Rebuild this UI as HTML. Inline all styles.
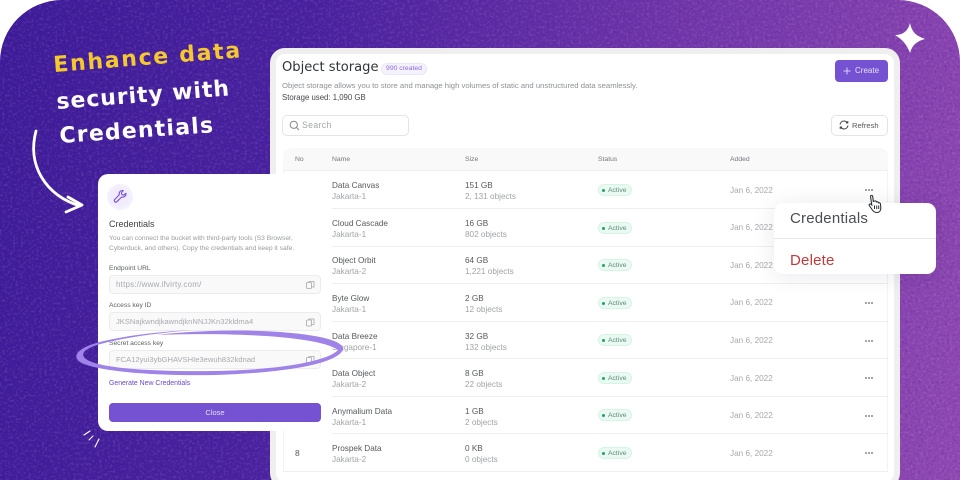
<!DOCTYPE html>
<html><head><meta charset="utf-8">
<style>
*{box-sizing:border-box;margin:0;padding:0}
html,body{width:960px;height:480px;overflow:hidden;background:#fff}
body{position:relative;font-family:"Liberation Sans","DejaVu Sans",sans-serif}
#bg{position:absolute;left:0;top:0;width:960px;height:480px;border-radius:62px 62px 0 0;overflow:hidden;background:linear-gradient(100deg,#3c1b98 0%,#47209e 30%,#6c33a8 62%,#9049b2 100%)}
#bg svg{position:absolute;left:0;top:0}
.a{position:absolute;white-space:nowrap}
#card{position:absolute;left:270px;top:48px;width:630px;height:440px;background:#fff;border:6px solid #efefef;border-radius:15px}
.n{font-size:8.2px;color:#55585d;margin-top:1px}
.s{font-size:8.2px;color:#a0a3a7;margin-top:1px}
.d{position:absolute;left:332px;width:556px;height:1px;background:#efefef}
.badge{position:absolute;left:598px;width:34px;height:12px;border-radius:6px;background:#eafaf3;border:1px solid #d6f4e6;font-size:6.8px;line-height:11px;color:#5d8a76;padding-left:9px}
.badge:before{content:"";position:absolute;left:3px;top:3.500px;width:3px;height:3px;border-radius:50%;background:#1fa36c}
.dt{font-size:8.2px;color:#a5a8ac;left:730px}
.dots{left:865px;width:8px;height:2px;background:radial-gradient(circle at 1px 1px,#85878b 0.8px,transparent 1px) 0 0/3px 2px}
#modal{position:absolute;left:98px;top:174px;width:234px;height:257px;background:#fff;border-radius:10px}
.inp{position:absolute;left:109px;width:212px;height:19px;background:#f9f9fa;border:1px solid #ececee;border-radius:4px;font-size:7.600px;line-height:17px;color:#a8aaae;padding-left:6px}
.lb{font-size:6.700px;color:#5d6065}
</style></head>
<body>
<div id="bg">
<svg width="960" height="480">
<filter id="nz" x="0" y="0" width="100%" height="100%"><feTurbulence type="fractalNoise" baseFrequency="0.38" numOctaves="2" seed="4"/><feColorMatrix type="matrix" values="0 0 0 0 .1  0 0 0 0 .02  0 0 0 0 .3  3.500 0 0 0 -1.700"/></filter>
<filter id="nz2" x="0" y="0" width="100%" height="100%"><feTurbulence type="fractalNoise" baseFrequency="0.38" numOctaves="2" seed="11"/><feColorMatrix type="matrix" values="0 0 0 0 1  0 0 0 0 .8  0 0 0 0 1  3.500 0 0 0 -1.700"/></filter>
<rect width="960" height="480" filter="url(#nz)" opacity=".3"/>
<rect width="960" height="480" filter="url(#nz2)" opacity=".1"/>
</svg>
</div>

<svg class="a" style="left:0;top:0" width="960" height="480">
<g font-family="'DejaVu Sans',sans-serif">
<text x="54" y="72" transform="rotate(-4.500 54 72)" font-size="22" font-weight="700" fill="#f5c92e" letter-spacing="1.700">Enhance data</text>
<text x="57" y="109" transform="rotate(-4.500 57 109)" font-size="22" fill="#fff" font-weight="700" letter-spacing=".95">security with</text>
<text x="60" y="143" transform="rotate(-4 60 143)" font-size="22" fill="#fff" font-weight="700" letter-spacing="1.200">Credentials</text>
</g>
<path d="M36 131C27 165 45 195 80 206" fill="none" stroke="#fff" stroke-width="2.800" stroke-linecap="round"/>
<path d="M68 197L82 205L66 212" fill="none" stroke="#fff" stroke-width="2.800" stroke-linecap="round" stroke-linejoin="round"/>
<path d="M910 23C912 33 917 36 925 39C917 41 912 45 910 53C907 45 903 40 895 35C903 35 908 31 910 23Z" fill="#fff"/>
<path d="M84 435L90 431M89 440L93 436M95 447L99 439" stroke="#fff" stroke-width="1.100" stroke-linecap="round"/>
</svg>

<div id="card"></div>
<div class="a" style="left:282px;top:60px;font-size:13.100px;line-height:16px;color:#30343a;font-family:'DejaVu Sans',sans-serif">Object storage</div>
<div class="a" style="left:381px;top:63px;width:46px;height:12px;border-radius:6px;background:#f6f2fd;border:1px solid #ece6f8;font-size:6.800px;line-height:10px;color:#8a6bd6;text-align:center">990 created</div>
<div class="a" style="left:282px;top:81px;font-size:7.700px;color:#8d9095">Object storage allows you to store and manage high volumes of static and unstructured data seamlessly.</div>
<div class="a" style="left:282px;top:93px;font-size:7.800px;color:#45484d">Storage used: 1,090 GB</div>

<div class="a" style="left:835px;top:60px;width:53px;height:22px;border-radius:4px;background:#7552d2;color:#e7e0fa;font-size:8px;line-height:22px;padding-left:20px">Create</div>
<svg class="a" style="left:843px;top:67px" width="8" height="8"><path d="M4 .5V7.500M.5 4H7.500" stroke="#d8ccf7" stroke-width="1"/></svg>

<div class="a" style="left:282px;top:115px;width:127px;height:21px;border:1px solid #e4e4e6;border-radius:5px;background:#fff;font-size:8.800px;line-height:19px;color:#a5a7ab;padding-left:19px;letter-spacing:.3px">Search</div>
<svg class="a" style="left:289px;top:120px" width="11" height="11" viewBox="0 0 11 11"><circle cx="4.800" cy="4.800" r="3.600" fill="none" stroke="#888" stroke-width="1"/><path d="M7.500 7.500L10 10" stroke="#888" stroke-width="1"/></svg>

<div class="a" style="left:831px;top:115px;width:57px;height:21px;border:1px solid #e4e4e6;border-radius:5px;background:#fff;font-size:7.600px;line-height:19px;color:#54575c;padding-left:20px">Refresh</div>
<svg class="a" style="left:839px;top:120px" width="10" height="10" viewBox="0 0 10 10" fill="none" stroke="#444" stroke-width="1"><path d="M1 4.500C1.500 2 3.500 1 5 1C6.500 1 7.600 1.700 8.400 2.800M9 5.500C8.500 8 6.500 9 5 9C3.500 9 2.400 8.300 1.600 7.200"/><path d="M8.800 1V3H6.800M1.200 9V7H3.200"/></svg>

<div class="a" style="left:283px;top:148px;width:605px;height:23px;background:#f9f9f9;border-bottom:1px solid #efefef;border-radius:8px 8px 0 0"></div>
<div class="a" style="left:283px;top:171px;width:605px;height:300px;border-left:1px solid #f3f3f3;border-right:1px solid #f3f3f3"></div>
<div class="a" style="left:295px;top:156px;font-size:6.800px;color:#74777c">No</div>
<div class="a" style="left:332px;top:156px;font-size:6.800px;color:#74777c">Name</div>
<div class="a" style="left:465px;top:156px;font-size:6.800px;color:#74777c">Size</div>
<div class="a" style="left:598px;top:156px;font-size:6.800px;color:#74777c">Status</div>
<div class="a" style="left:730px;top:156px;font-size:6.800px;color:#74777c">Added</div>

<div class="d" style="top:208px"></div><div class="d" style="top:246px"></div><div class="d" style="top:283px"></div><div class="d" style="top:321px"></div><div class="d" style="top:358px"></div><div class="d" style="top:396px"></div><div class="d" style="top:433px"></div><div class="d" style="top:471px;left:283px;width:605px"></div>

<div class="a n" style="left:332px;top:180px">Data Canvas</div><div class="a s" style="left:332px;top:191px">Jakarta-1</div><div class="a n" style="left:465px;top:180px">151 GB</div><div class="a s" style="left:465px;top:191px">2, 131 objects</div><div class="badge" style="top:184px">Active</div><div class="a dt" style="top:186px">Jan 6, 2022</div><div class="a dots" style="top:189px"></div>
<div class="a n" style="left:332px;top:218px">Cloud Cascade</div><div class="a s" style="left:332px;top:229px">Jakarta-1</div><div class="a n" style="left:465px;top:218px">16 GB</div><div class="a s" style="left:465px;top:229px">802 objects</div><div class="badge" style="top:222px">Active</div><div class="a dt" style="top:223px">Jan 6, 2022</div>
<div class="a n" style="left:332px;top:255px">Object Orbit</div><div class="a s" style="left:332px;top:266px">Jakarta-2</div><div class="a n" style="left:465px;top:255px">64 GB</div><div class="a s" style="left:465px;top:266px">1,221 objects</div><div class="badge" style="top:259px">Active</div><div class="a dt" style="top:261px">Jan 6, 2022</div>
<div class="a n" style="left:332px;top:293px">Byte Glow</div><div class="a s" style="left:332px;top:304px">Jakarta-1</div><div class="a n" style="left:465px;top:293px">2 GB</div><div class="a s" style="left:465px;top:304px">12 objects</div><div class="badge" style="top:297px">Active</div><div class="a dt" style="top:298px">Jan 6, 2022</div><div class="a dots" style="top:302px"></div>
<div class="a n" style="left:332px;top:331px">Data Breeze</div><div class="a s" style="left:332px;top:342px">Singapore-1</div><div class="a n" style="left:465px;top:331px">32 GB</div><div class="a s" style="left:465px;top:342px">132 objects</div><div class="badge" style="top:334px">Active</div><div class="a dt" style="top:336px">Jan 6, 2022</div><div class="a dots" style="top:340px"></div>
<div class="a n" style="left:332px;top:368px">Data Object</div><div class="a s" style="left:332px;top:379px">Jakarta-2</div><div class="a n" style="left:465px;top:368px">8 GB</div><div class="a s" style="left:465px;top:379px">22 objects</div><div class="badge" style="top:372px">Active</div><div class="a dt" style="top:374px">Jan 6, 2022</div><div class="a dots" style="top:377px"></div>
<div class="a n" style="left:332px;top:406px">Anymalium Data</div><div class="a s" style="left:332px;top:417px">Jakarta-1</div><div class="a n" style="left:465px;top:406px">1 GB</div><div class="a s" style="left:465px;top:417px">2 objects</div><div class="badge" style="top:409px">Active</div><div class="a dt" style="top:411px">Jan 6, 2022</div><div class="a dots" style="top:415px"></div>
<div class="a" style="left:295px;top:448px;font-size:8.500px;color:#54575c">8</div>
<div class="a n" style="left:332px;top:443px">Prospek Data</div><div class="a s" style="left:332px;top:454px">Jakarta-2</div><div class="a n" style="left:465px;top:443px">0 KB</div><div class="a s" style="left:465px;top:454px">0 objects</div><div class="badge" style="top:447px">Active</div><div class="a dt" style="top:449px">Jan 6, 2022</div><div class="a dots" style="top:452px"></div>

<div class="a" style="left:774px;top:203px;width:162px;height:71px;background:#fff;border-radius:9px;box-shadow:0 2px 22px rgba(40,30,70,.10)"></div>
<div class="a" style="left:774px;top:238px;width:162px;height:1px;background:#e6e6e8"></div>
<div class="a" style="left:790px;top:210px;font-size:15px;color:#4b4f55;letter-spacing:.2px">Credentials</div>
<div class="a" style="left:790px;top:252px;font-size:15px;color:#c0393b;letter-spacing:.2px">Delete</div>
<svg class="a" style="left:867px;top:194px" width="16" height="19" viewBox="0 0 15 19"><path d="M3 2.500C3 1 5 1 5.200 2.500L5.800 7.500L7.200 7C8.200 6.800 8.800 7.200 9 8C10 7.500 10.800 8 11 8.800C12 8.500 13 9 13 10.200L13.300 14C13.300 16.500 12 18.500 9.500 18.500C7 18.500 5.800 17.500 4.500 15.500L1.800 11.500C1.200 10.500 2.500 9.500 3.500 10.300L4.300 11Z" fill="#fff" stroke="#2e3136" stroke-width="1.100"/><path d="M7 11.500V15M9.200 11.500V15M11.200 11.500V15" stroke="#2e3136" stroke-width="1"/></svg>

<div id="modal"></div>
<div class="a" style="left:107px;top:184px;width:26px;height:26px;border-radius:50%;background:radial-gradient(circle,#f1ebfd 40%,#faf8fe 100%)"></div>
<svg class="a" style="left:113px;top:189px" width="15" height="15" viewBox="0 0 15 15"><path d="M9.500 1.500A3.300 3.300 0 0 0 6.300 5.800L1.700 10.500A1.500 1.500 0 0 0 3.900 12.700L8.700 8A3.300 3.300 0 0 0 12.900 4.300L10.800 6.100L8.800 5.700L8.400 3.700L10.200 1.600Z" fill="none" stroke="#7552d2" stroke-width="1.100" stroke-linejoin="round"/></svg>
<div class="a" style="left:109px;top:219px;font-size:9px;color:#3f4247">Credentials</div>
<div class="a" style="left:109px;top:234px;font-size:6.700px;line-height:9.500px;color:#989b9f">You can connect the bucket with third-party tools (S3 Browser,<br>Cyberduck, and others). Copy the credentials and keep it safe.</div>
<div class="a lb" style="left:109px;top:265px">Endpoint URL</div>
<div class="inp" style="top:275px;font-size:8px;letter-spacing:.2px">https://www.ifvirty.com/</div>
<div class="a lb" style="left:109px;top:302px">Access key ID</div>
<div class="inp" style="top:312px">JKSNajkwndjkawndjknNNJJKn32kldma4</div>
<div class="a lb" style="left:109px;top:340px">Secret access key</div>
<div class="inp" style="top:350px">FCA12yui3ybGHAVSHIe3ewuh832kdnad</div>
<svg class="a" style="left:0;top:0" width="340" height="400" fill="none" stroke="#a4a6aa" stroke-width=".8">
<rect x="306.500" y="282.500" width="5" height="6" rx="1"/><path d="M309 282.500V281.500H314V287H311.500"/>
<rect x="306.500" y="320" width="5" height="6" rx="1"/><path d="M309 320V319H314V324.500H311.500"/>
<rect x="306.500" y="357.500" width="5" height="6" rx="1"/><path d="M309 357.500V356.500H314V362H311.500"/>
</svg>
<div class="a" style="left:109px;top:380px;font-size:6.900px;color:#6a49c6">Generate New Credentials</div>
<div class="a" style="left:109px;top:403px;width:212px;height:19px;border-radius:4px;background:#7552d2;color:#e4dcf9;font-size:7.500px;line-height:19px;text-align:center">Close</div>

<svg class="a" style="left:0;top:0" width="400" height="420"><path d="M193 330C150 332 110 338 90 345C78 350 72 356 80 362C95 371 150 376 215 375C280 373 335 365 343 350C345 341 320 335 280 332C240 329 190 331 157 335C200 333 315 333 338 350C328 361 280 370 215 371C150 372 98 368 86 359C80 354 84 350 94 346C115 339 155 333 193 330Z" fill="#a083e8"/></svg>
</body></html>
